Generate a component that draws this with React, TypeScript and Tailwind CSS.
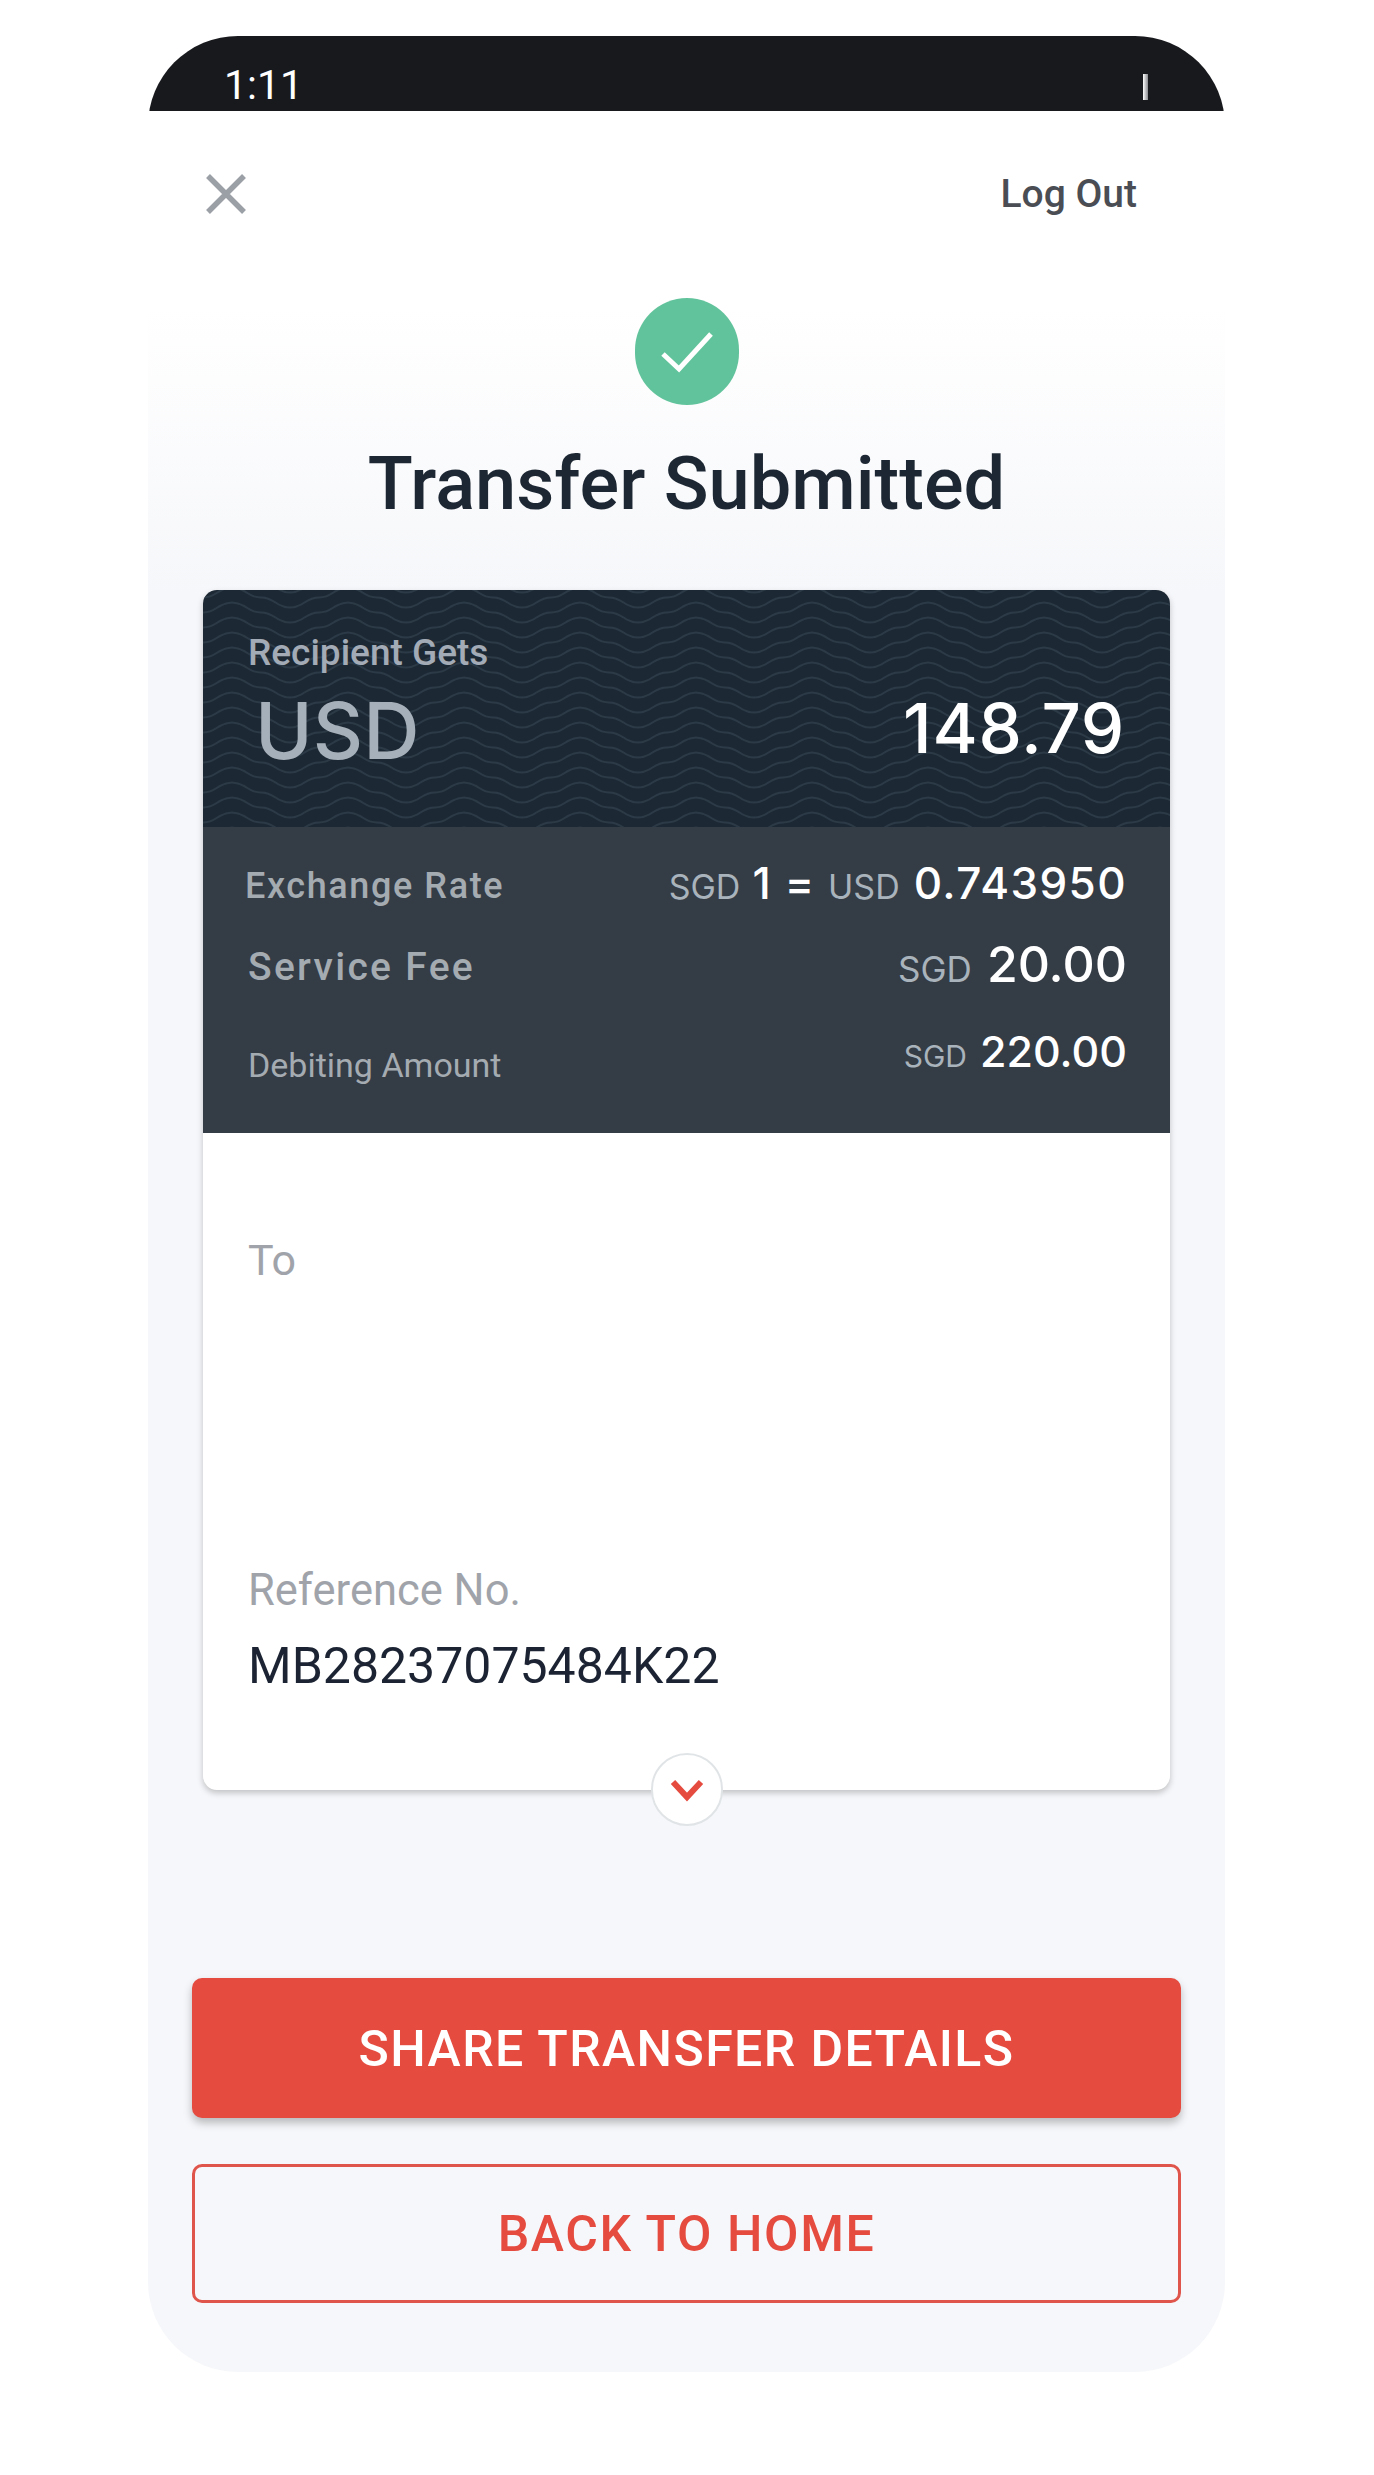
import { useId } from "react";

const ROW_LABEL = "font-['Roboto',sans-serif] text-[#a4abb1]";
const WAVE = "C 14 0 15 -10 29 -10 S 44 0 58 0 S 73 10 87 10 S 102 0 116 0";

// faint wave lines behind the amount header
function WavePattern() {
  const id = useId();
  return (
    <svg className="absolute inset-0 h-full w-full" aria-hidden="true">
      <defs>
        <pattern id={id} width="116" height="15" patternUnits="userSpaceOnUse">
          <g fill="none" stroke="#2b3a46" strokeWidth="2">
            <path d={`M0 0 ${WAVE}`} transform="translate(0 -7.5)" />
            <path d={`M0 0 ${WAVE}`} transform="translate(0 7.5)" />
            <path d={`M0 0 ${WAVE}`} transform="translate(0 22.5)" />
          </g>
        </pattern>
      </defs>
      <rect width="100%" height="100%" fill={`url(#${id})`} />
    </svg>
  );
}

function Amount({
  cur,
  value,
  curClass,
  valueClass,
}: {
  cur: string;
  value: string;
  curClass: string;
  valueClass: string;
}) {
  return (
    <>
      <span className={`text-[#a9b3bb] font-normal ${curClass}`}>{cur}</span>
      <span className={`text-white font-medium ${valueClass}`}>{value}</span>
    </>
  );
}

export default function App() {
  return (
    <div className="min-h-[2475px] bg-white pt-[36px] font-['Roboto',sans-serif]">
      <div className="ml-[148px] flex h-[2336px] w-[1077px] flex-col overflow-hidden rounded-[90px] bg-[linear-gradient(to_bottom,#ffffff_110px,#ffffff_270px,#f6f7fa_560px)]">
        {/* status bar */}
        <div className="flex h-[75px] shrink-0 items-end justify-between bg-[#18191d] pb-[3px] pl-[76px] pr-[77px]">
          <span className="text-[41px] leading-[46px] font-normal text-white">1:11</span>
          <span className="mb-[8px] h-[26px] w-[5px] bg-gradient-to-r from-white to-[#8b8c90]" />
        </div>

        {/* top nav */}
        <div className="mt-[31px] flex h-[104px] shrink-0 items-center justify-between pl-[50px] pr-[88px]">
          <svg width="56" height="56" viewBox="0 0 56 56" fill="none" stroke="#9ba0a7" strokeWidth="5.5">
            <path d="M10 10 L46 46 M46 10 L10 46" />
          </svg>
          <span className="text-[39px] leading-none font-medium text-[#4a4e54]">Log Out</span>
        </div>

        <div className="mt-[52px] flex shrink-0 justify-center">
          <div className="flex h-[107px] w-[104px] items-center justify-center rounded-full bg-[#61c39b]">
            <svg width="54" height="42" viewBox="0 0 54 42" fill="none" stroke="#ffffff" strokeWidth="5">
              <path d="M3 23 L19 38 L51 3" />
            </svg>
          </div>
        </div>

        <h1 className="mt-[37px] shrink-0 text-center text-[74px] leading-[84px] font-medium text-[#1c2733]">
          Transfer Submitted
        </h1>

        {/* summary card */}
        <div className="relative mx-[55px] mt-[64px] h-[1200px] shrink-0 rounded-[14px] bg-white shadow-[0_3px_6px_rgba(0,0,0,0.22)]">
          <div className="relative h-[237px] overflow-hidden rounded-t-[14px] bg-[#1c2834] px-[45px]">
            <WavePattern />
            <div className="relative flex h-full flex-col">
              <div className="mt-[42px] text-[37px] leading-[42px] font-medium text-[#a3abb6]">Recipient Gets</div>
              <div className="mt-[11px] flex items-center justify-between">
                <span className="ml-[7px] mt-[6px] font-['Inter',sans-serif] text-[78px] leading-[80px] font-medium text-[#a6b0ba]">USD</span>
                <span className="font-['Inter',sans-serif] text-[69px] leading-[80px] font-medium tracking-[0.7px] text-white">148.79</span>
              </div>
            </div>
          </div>

          <div className="flex h-[306px] flex-col bg-[#343c46] pl-[45px] pr-[43px]">
            <div className="mt-[28px] flex h-[62px] items-center justify-between">
              <span className={`${ROW_LABEL} -ml-[3px] text-[36px] font-medium tracking-[1.6px]`}>Exchange Rate</span>
              <span className="-mt-[6px] flex items-baseline font-['Inter',sans-serif] text-[44px]">
                <Amount cur="SGD" value="1" curClass="text-[34px]" valueClass="ml-[12px]" />
                <span className="mx-[14px] font-medium text-white">=</span>
                <Amount cur="USD" value="0.743950" curClass="text-[34px]" valueClass="ml-[14px] tracking-[1.4px]" />
              </span>
            </div>
            <div className="mt-[16px] flex h-[62px] items-center justify-between">
              <span className={`${ROW_LABEL} mt-[6px] text-[39px] font-medium tracking-[2.3px]`}>Service Fee</span>
              <span className="flex items-baseline font-['Inter',sans-serif]">
                <Amount cur="SGD" value="20.00" curClass="text-[35px]" valueClass="ml-[15px] text-[50px]" />
              </span>
            </div>
            <div className="mt-[26px] flex h-[62px] items-center justify-between">
              <span className={`${ROW_LABEL} mt-[26px] text-[34px]`}>Debiting Amount</span>
              <span className="-mt-[2px] flex items-baseline font-['Inter',sans-serif]">
                <Amount cur="SGD" value="220.00" curClass="text-[30px]" valueClass="ml-[13px] text-[43px]" />
              </span>
            </div>
          </div>

          <div className="flex flex-col px-[45px]">
            <div className="mt-[103px] text-[43px] leading-[48px] text-[#a0a4aa]">To</div>
            <div className="mt-[283px] text-[43.5px] leading-[48px] text-[#a0a4aa]">Reference No.</div>
            <div className="mt-[24px] text-[50px] leading-[54px] text-[#1c2433]">MB28237075484K22</div>
          </div>

          {/* expand toggle sits across the card edge */}
          <div className="absolute bottom-[-36px] left-1/2 flex h-[73px] w-[72px] -translate-x-1/2 items-center justify-center rounded-full border-2 border-[#e1e4e6] bg-white">
            <svg width="36" height="26" viewBox="0 0 36 26" fill="none" stroke="#e54b3f" strokeWidth="6">
              <path d="M4 5 L18 20 L32 5" />
            </svg>
          </div>
        </div>

        {/* actions */}
        <div className="mx-[44px] mt-[188px] flex shrink-0 flex-col gap-[46px]">
          <button
            type="button"
            className="h-[140px] rounded-[10px] bg-[#e54b3f] pt-[2px] text-[50px] font-medium tracking-[1.4px] text-white shadow-[0_5px_8px_rgba(0,0,0,0.25)]"
          >
            SHARE TRANSFER DETAILS
          </button>
          <button
            type="button"
            className="h-[139px] rounded-[10px] border-[3px] border-[#e0554b] pt-[2px] text-[50px] font-medium tracking-[1.6px] text-[#e54b3f]"
          >
            BACK TO HOME
          </button>
        </div>
      </div>
    </div>
  );
}
